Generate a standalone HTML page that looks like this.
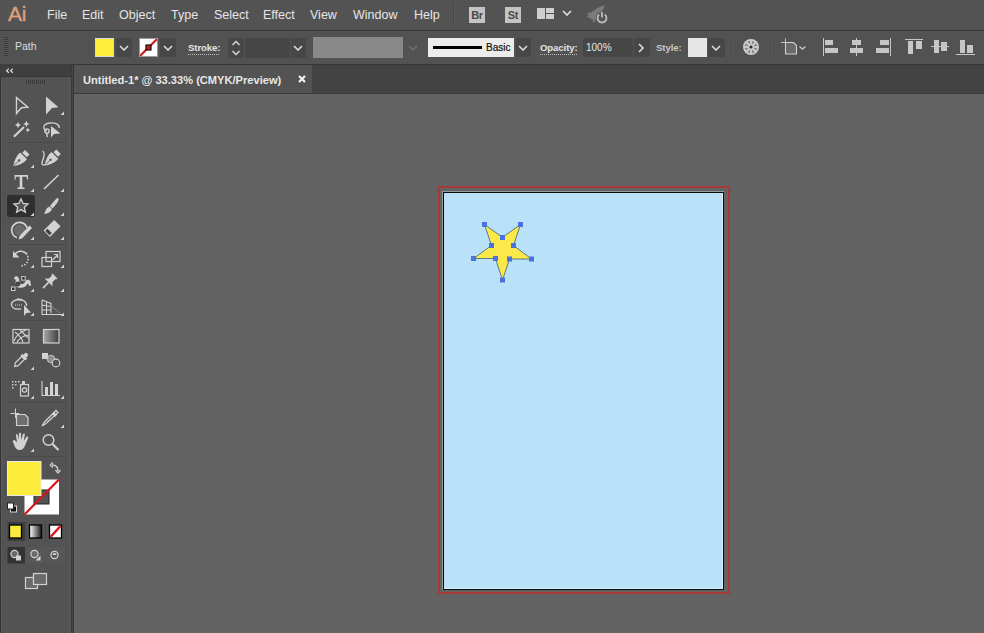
<!DOCTYPE html>
<html><head><meta charset="utf-8">
<style>
*{margin:0;padding:0;box-sizing:border-box}
html,body{width:984px;height:633px;overflow:hidden;background:#636363;font-family:"Liberation Sans",sans-serif}
.a{position:absolute}
#menubar{left:0;top:0;width:984px;height:31px;background:#535353}
#menubar .m{position:absolute;top:8px;font-size:12.5px;color:#e6e6e6;white-space:nowrap}
#mline{left:0;top:30px;width:984px;height:1px;background:#383838}
#ctrl{left:0;top:31px;width:984px;height:33px;background:#525252}
#cline{left:0;top:64px;width:984px;height:1px;background:#363636}
#tabbar{left:72px;top:65px;width:912px;height:28px;background:#434343}
#tab{left:74px;top:65px;width:238px;height:28px;background:#535353}
#tline{left:72px;top:93px;width:912px;height:1px;background:#3a3a3a}
#tools{left:0;top:65px;width:71px;height:568px;background:#535353}
#thead{left:0;top:64px;width:71px;height:13px;background:#3f3f3f}
#tsep{left:71px;top:65px;width:3px;height:568px;background:linear-gradient(90deg,#3b3b3b 0 1px,#464646 1px 2px,#363636 2px 3px)}
.lbl{font-size:10px;color:#e0e0e0;white-space:nowrap}
.dd{background:#474747;border-radius:2px}
</style></head><body>
<div class="a" id="menubar">
  <div class="a" style="left:8px;top:2px;font-size:21px;color:#dea07a;-webkit-text-stroke:0.4px #dea07a;letter-spacing:-0.3px">Ai</div>
  <span class="m" style="left:47px">File</span>
  <span class="m" style="left:82px">Edit</span>
  <span class="m" style="left:119px">Object</span>
  <span class="m" style="left:171px">Type</span>
  <span class="m" style="left:214px">Select</span>
  <span class="m" style="left:263px">Effect</span>
  <span class="m" style="left:310px">View</span>
  <span class="m" style="left:353px">Window</span>
  <span class="m" style="left:414px">Help</span>
</div>
<div class="a" id="mline"></div>

<!-- menubar icons -->
<div class="a" style="left:453px;top:4px;width:1px;height:22px;background:#474747"></div>
<div class="a" style="left:454px;top:4px;width:1px;height:22px;background:#5c5c5c"></div>
<div class="a" style="left:469px;top:7px;width:16px;height:16px;background:#c4c4c4;color:#4a4a4a;font-size:11px;font-weight:bold;line-height:16px;text-align:center;letter-spacing:-0.3px">Br</div>
<div class="a" style="left:505px;top:7px;width:16px;height:16px;background:#c4c4c4;color:#4a4a4a;font-size:11px;font-weight:bold;line-height:16px;text-align:center;letter-spacing:-0.3px">St</div>
<div class="a" style="left:537px;top:8px;width:8px;height:11px;background:#cfcfcf"></div>
<div class="a" style="left:546px;top:8px;width:8px;height:5px;background:#cfcfcf"></div>
<div class="a" style="left:546px;top:14px;width:8px;height:5px;background:#cfcfcf"></div>
<svg class="a" style="left:562px;top:10px" width="10" height="6" viewBox="0 0 10 6"><path d="M1 1 L5 5 L9 1" fill="none" stroke="#e0e0e0" stroke-width="1.6"/></svg>
<svg class="a" style="left:584px;top:3px" width="28" height="22" viewBox="0 0 28 22">
 <path d="M3 14 C7 9 13 4 21 2 C19 8 15 13 10 17 Z" fill="#7a7a7a"/>
 <path d="M2 11 L6 9 L8 12 Z M8 17 L10 20 L12 16 Z" fill="#7a7a7a"/>
 <circle cx="18" cy="15" r="6.2" fill="#535353"/>
 <path d="M15.2 11.5 A4.5 4.5 0 1 0 20.8 11.5" fill="none" stroke="#bdbdbd" stroke-width="1.8"/>
 <path d="M18 9 V14.5" stroke="#bdbdbd" stroke-width="1.8"/>
</svg>

<div class="a" id="ctrl"></div>
<div class="a" id="cline"></div>

<!-- control bar content -->
<div class="a" style="left:4px;top:37px;width:4px;height:20px;background:repeating-linear-gradient(#3c3c3c 0 1px,#555 1px 2px)"></div>
<div class="a lbl" style="left:15px;top:40px;font-size:10.5px;color:#dcdcdc">Path</div>
<div class="a" style="left:95px;top:38px;width:19px;height:19px;background:#fdee3b;border:1px solid #d8d8d8"></div>
<div class="a dd" style="left:116px;top:38px;width:16px;height:19px"></div>
<svg class="a" style="left:119px;top:45px" width="10" height="6" viewBox="0 0 10 6"><path d="M1 1 L5 5 L9 1" fill="none" stroke="#dcdcdc" stroke-width="1.6"/></svg>
<div class="a" style="left:139px;top:38px;width:19px;height:19px;background:#fff;border:1px solid #9a9a9a;overflow:hidden">
 <svg width="19" height="19" style="position:absolute;left:-1px;top:-1px"><line x1="1" y1="18" x2="18" y2="1" stroke="#d01818" stroke-width="2"/><rect x="7" y="7" width="5" height="5" fill="#d01818" stroke="#111" stroke-width="1.2"/></svg>
</div>
<div class="a dd" style="left:160px;top:38px;width:16px;height:19px"></div>
<svg class="a" style="left:163px;top:45px" width="10" height="6" viewBox="0 0 10 6"><path d="M1 1 L5 5 L9 1" fill="none" stroke="#dcdcdc" stroke-width="1.6"/></svg>
<div class="a lbl" style="left:188px;top:42px;font-size:9.6px;font-weight:bold;color:#e4e4e4;letter-spacing:-0.1px">Stroke:</div>
<div class="a" style="left:188px;top:54px;width:32px;height:1px;background:repeating-linear-gradient(90deg,#bdbdbd 0 1px,transparent 1px 2px)"></div>
<div class="a dd" style="left:228px;top:38px;width:16px;height:20px"></div>
<svg class="a" style="left:231px;top:40px" width="10" height="16" viewBox="0 0 10 16"><path d="M1.5 5 L5 1.5 L8.5 5 M1.5 11 L5 14.5 L8.5 11" fill="none" stroke="#dcdcdc" stroke-width="1.4"/></svg>
<div class="a dd" style="left:245px;top:38px;width:45px;height:20px"></div>
<div class="a dd" style="left:291px;top:38px;width:15px;height:20px"></div>
<svg class="a" style="left:293px;top:45px" width="10" height="6" viewBox="0 0 10 6"><path d="M1 1 L5 5 L9 1" fill="none" stroke="#dcdcdc" stroke-width="1.6"/></svg>
<div class="a" style="left:313px;top:37px;width:90px;height:21px;background:#898989"></div>
<svg class="a" style="left:408px;top:45px" width="10" height="6" viewBox="0 0 10 6"><path d="M1 1 L5 5 L9 1" fill="none" stroke="#6e6e6e" stroke-width="1.6"/></svg>
<div class="a" style="left:428px;top:38px;width:86px;height:19px;background:#ececec"></div>
<div class="a" style="left:433px;top:46px;width:49px;height:3px;background:#000"></div>
<div class="a" style="left:486px;top:42px;font-size:10px;color:#111;-webkit-text-stroke:0.2px #111">Basic</div>
<div class="a dd" style="left:516px;top:38px;width:15px;height:19px"></div>
<svg class="a" style="left:518px;top:45px" width="10" height="6" viewBox="0 0 10 6"><path d="M1 1 L5 5 L9 1" fill="none" stroke="#dcdcdc" stroke-width="1.6"/></svg>
<div class="a lbl" style="left:540px;top:42px;font-size:9.6px;font-weight:bold;color:#e4e4e4;letter-spacing:-0.1px">Opacity:</div>
<div class="a" style="left:540px;top:54px;width:37px;height:1px;background:repeating-linear-gradient(90deg,#bdbdbd 0 1px,transparent 1px 2px)"></div>
<div class="a dd" style="left:583px;top:38px;width:50px;height:19px"></div>
<div class="a" style="left:586px;top:42px;font-size:10px;color:#e6e6e6">100%</div>
<div class="a dd" style="left:634px;top:38px;width:16px;height:19px"></div>
<svg class="a" style="left:638px;top:43px" width="6" height="10" viewBox="0 0 6 10"><path d="M1 1 L5 5 L1 9" fill="none" stroke="#dcdcdc" stroke-width="1.6"/></svg>
<div class="a lbl" style="left:656px;top:42px;font-size:9.6px;font-weight:bold;color:#c8c8c8;letter-spacing:-0.1px">Style:</div>
<div class="a" style="left:688px;top:38px;width:19px;height:19px;background:#e6e6e6"></div>
<div class="a dd" style="left:708px;top:38px;width:17px;height:19px"></div>
<svg class="a" style="left:711px;top:45px" width="10" height="6" viewBox="0 0 10 6"><path d="M1 1 L5 5 L9 1" fill="none" stroke="#dcdcdc" stroke-width="1.6"/></svg>
<div class="a" style="left:731px;top:35px;width:1px;height:26px;background:#4a4a4a"></div><div class="a" style="left:732px;top:35px;width:1px;height:26px;background:#585858"></div>
<svg class="a" style="left:742px;top:38px" width="18" height="18" viewBox="0 0 18 18"><circle cx="9" cy="9" r="8" fill="#cdcdcd"/><circle cx="9" cy="9" r="6.3" fill="#8a8a8a"/><g stroke="#d6d6d6" stroke-width="1.6">
<line x1="9" y1="2.5" x2="9" y2="15.5"/><line x1="2.5" y1="9" x2="15.5" y2="9"/><line x1="4.4" y1="4.4" x2="13.6" y2="13.6"/><line x1="13.6" y1="4.4" x2="4.4" y2="13.6"/></g><circle cx="9" cy="9" r="1.6" fill="#2a2a2a"/></svg>
<div class="a" style="left:770px;top:35px;width:1px;height:26px;background:#4a4a4a"></div><div class="a" style="left:771px;top:35px;width:1px;height:26px;background:#585858"></div>
<svg class="a" style="left:780px;top:38px" width="30" height="18" viewBox="0 0 30 18"><path d="M1 4.5 H5.5 M5.5 0.5 V4.5" fill="none" stroke="#c6c6c6" stroke-width="1"/><path d="M5.5 4.5 H13.5 L16.5 7.5 V16 H5.5 Z" fill="#6a6a6a" stroke="#d0d0d0" stroke-width="1.1"/><path d="M19.5 8.5 L22.5 11 L25.5 8.5" fill="none" stroke="#c6c6c6" stroke-width="1.4"/></svg>
<g></g>
<div class="a" style="left:823px;top:38px;width:1px;height:18px;background:#c6c6c6"></div>
<div class="a" style="left:825px;top:40px;width:8px;height:5px;background:#c6c6c6"></div>
<div class="a" style="left:825px;top:48px;width:13px;height:5px;background:#c6c6c6"></div>
<div class="a" style="left:856px;top:38px;width:1px;height:18px;background:#c6c6c6"></div>
<div class="a" style="left:852px;top:40px;width:9px;height:5px;background:#c6c6c6"></div>
<div class="a" style="left:850px;top:48px;width:13px;height:5px;background:#c6c6c6"></div>
<div class="a" style="left:890px;top:38px;width:1px;height:18px;background:#c6c6c6"></div>
<div class="a" style="left:880px;top:40px;width:9px;height:5px;background:#c6c6c6"></div>
<div class="a" style="left:876px;top:48px;width:13px;height:5px;background:#c6c6c6"></div>
<div class="a" style="left:905px;top:39px;width:18px;height:1px;background:#c6c6c6"></div>
<div class="a" style="left:908px;top:41px;width:5px;height:13px;background:#c6c6c6"></div>
<div class="a" style="left:916px;top:41px;width:6px;height:8px;background:#c6c6c6"></div>
<div class="a" style="left:931px;top:46px;width:18px;height:1px;background:#c6c6c6"></div>
<div class="a" style="left:934px;top:40px;width:5px;height:13px;background:#c6c6c6"></div>
<div class="a" style="left:941px;top:42px;width:6px;height:9px;background:#c6c6c6"></div>
<div class="a" style="left:956px;top:54px;width:19px;height:1px;background:#c6c6c6"></div>
<div class="a" style="left:960px;top:40px;width:5px;height:13px;background:#c6c6c6"></div>
<div class="a" style="left:967px;top:45px;width:6px;height:8px;background:#c6c6c6"></div>

<div class="a" id="tabbar"></div>
<div class="a" id="tab"></div>
<div class="a" id="tline"></div>
<div class="a" id="tabtxt" style="left:83px;top:74px;font-size:11.1px;font-weight:bold;color:#e8e8e8;white-space:nowrap">Untitled-1* @ 33.33% (CMYK/Preview)</div>
<svg class="a" style="left:298px;top:75px" width="8" height="8" viewBox="0 0 8 8"><path d="M1 1 L7 7 M7 1 L1 7" stroke="#f4f4f4" stroke-width="2.2"/></svg>

<div class="a" id="tools"></div>
<div class="a" id="thead"></div>
<div class="a" id="tsep"></div>

<!-- toolbar -->
<svg class="a" style="left:0;top:0" width="74" height="633" viewBox="0 0 74 633">
 <rect x="0" y="65" width="1" height="568" fill="#343434"/>
 <rect x="1" y="77" width="1" height="556" fill="#5a5a5a"/>
 <rect x="5" y="77" width="1" height="556" fill="#4f4f4f"/>
 <rect x="6" y="77" width="1" height="556" fill="#585858"/>
 <rect x="66" y="77" width="5" height="556" fill="#555555"/>
 <rect x="66" y="77" width="1" height="556" fill="#4f4f4f"/>
 <rect x="0" y="65" width="71" height="12" fill="#3f3f3f"/>
 <rect x="0" y="76" width="71" height="1" fill="#363636"/>
 <path d="M8.8 68.6 L6.6 70.7 L8.8 72.8 M12.8 68.6 L10.6 70.7 L12.8 72.8" fill="none" stroke="#dcdcdc" stroke-width="1.2"/>
 <g fill="#3a3a3a"><rect x="26" y="80" width="1" height="4"/><rect x="28" y="80" width="1" height="4"/><rect x="30" y="80" width="1" height="4"/><rect x="32" y="80" width="1" height="4"/><rect x="34" y="80" width="1" height="4"/><rect x="36" y="80" width="1" height="4"/><rect x="38" y="80" width="1" height="4"/><rect x="40" y="80" width="1" height="4"/><rect x="42" y="80" width="1" height="4"/><rect x="44" y="80" width="1" height="4"/></g>
 <!-- group separators -->
 <g fill="#4a4a4a"><rect x="7" y="142" width="58" height="1"/><rect x="7" y="244" width="58" height="1"/><rect x="7" y="320" width="58" height="1"/><rect x="7" y="402" width="58" height="1"/><rect x="7" y="456" width="58" height="1"/></g>
 <g fill="#d2d2d2" stroke="none">
 <!-- row1 selection -->
 <path d="M16.5 97.5 L27.8 107.2 L21.3 107.7 L16.5 113.5 Z" fill="none" stroke="#d2d2d2" stroke-width="1.4" stroke-linejoin="miter"/>
 <path d="M46 96.5 L58.5 107.2 L52 108 L46 114.5 Z"/>
 <path d="M64 111.5 L64 115 L60.5 115 Z" fill="#d2d2d2"/>
 <!-- row2 magic wand -->
 <path d="M13.8 136.8 L24 127" stroke="#d2d2d2" stroke-width="2.2"/>
 <path d="M18 121.8 l1 2.2 2.2 1 -2.2 1 -1 2.2 -1 -2.2 -2.2 -1 2.2 -1z M26.3 120.8 l1 2.2 2.2 1 -2.2 1 -1 2.2 -1 -2.2 -2.2 -1 2.2 -1z M27.8 127.6 l0.8 1.6 1.6 0.8 -1.6 0.8 -0.8 1.6 -0.8 -1.6 -1.6 -0.8 1.6 -0.8z"/>
 <!-- lasso -->
 <path d="M47 131 C42 129 43 123.5 50 123 C56 122.5 60 125 59 128" fill="none" stroke="#d2d2d2" stroke-width="1.3"/>
 <circle cx="47" cy="131" r="2.2" fill="none" stroke="#d2d2d2" stroke-width="1.3"/>
 <path d="M46.5 133 L47.5 137" stroke="#d2d2d2" stroke-width="1.3"/>
 <path d="M51 126 L51 137.5 L54 134 L60.5 133.5 Z"/>
 <!-- row3 pen -->
 <g transform="translate(20.2,159.3) rotate(45)"><rect x="-3.2" y="-10" width="6.4" height="4"/><path d="M-4.8 -4.8 H4.8 C5.5 0 3.5 4.5 0 10 C-3.5 4.5 -5.5 0 -4.8 -4.8 Z"/><circle cx="0" cy="1.5" r="1.2" fill="#535353"/><path d="M0 2.5 L0 10" stroke="#535353" stroke-width="0.8"/></g>
 <path d="M34 164.5 L34 168 L30.5 168 Z" fill="#d2d2d2"/>
 <g transform="translate(51.5,158.8) rotate(45)"><rect x="-3.2" y="-10" width="6.4" height="4"/><path d="M-4.8 -4.8 H4.8 C5.5 0 3.5 4.5 0 10 C-3.5 4.5 -5.5 0 -4.8 -4.8 Z"/><circle cx="0" cy="1.5" r="1.2" fill="#535353"/><path d="M0 2.5 L0 10" stroke="#535353" stroke-width="0.8"/></g>
 <path d="M42.5 151 C45 152 44 157 42.5 161 C41 165 43 166 46 164" fill="none" stroke="#d2d2d2" stroke-width="1.3"/>
 <!-- row4 type -->
 <path d="M14.5 175 H28 V179.5 H26.8 V176.8 H22.3 V187.5 H24.5 V189 H17.5 V187.5 H19.7 V176.8 H15.7 V179.5 H14.5 Z"/>
 <path d="M34 188.5 L34 192 L30.5 192 Z" fill="#d2d2d2"/>
 <path d="M44 189 L58.5 175" stroke="#d2d2d2" stroke-width="1.6"/>
 <path d="M64 188.5 L64 192 L60.5 192 Z" fill="#d2d2d2"/>
 <!-- row5 star selected -->
 <rect x="7" y="195" width="28" height="22" rx="2" fill="#2f2f2f"/>
 <path d="M21 199 L23.1 203.5 L28 204 L24.3 207.3 L25.4 212.2 L21 209.6 L16.6 212.2 L17.7 207.3 L14 204 L18.9 203.5 Z" fill="#535353" stroke="#d2d2d2" stroke-width="1.3" stroke-linejoin="miter"/>
 <path d="M34 212.5 L34 216 L30.5 216 Z" fill="#d2d2d2"/>
 <path d="M58 198 C60 199 57 204 52.5 208.5 L50 206 C54 201.5 56.5 197.5 58 198 Z"/>
 <path d="M49.5 206.5 L52 209 C51 212 48 213.5 44 214 C45.5 212 45.5 208 49.5 206.5 Z"/>
 <path d="M64 212.5 L64 216 L60.5 216 Z" fill="#d2d2d2"/>
 <!-- row6 shaper -->
 <circle cx="19.5" cy="230" r="5.6" fill="#6a6a6a"/>
 <path d="M17 237.6 A7.8 7.8 0 1 1 27 228" fill="none" stroke="#d2d2d2" stroke-width="1.7"/>
 <path d="M19.5 236 L29.5 225.5 L32 228 L22 238.5 L18.5 239.5 Z"/>
 <path d="M34 236.5 L34 240 L30.5 240 Z" fill="#d2d2d2"/>
 <g transform="translate(51,229.5) rotate(45)"><path d="M-4.5 -9 H4.5 V6 H-4.5 Z"/><rect x="-3" y="2" width="6" height="3" fill="#404040"/></g>
 <path d="M64 236.5 L64 240 L60.5 240 Z" fill="#d2d2d2"/>
 <!-- row7 rotate -->
 <path d="M14.5 255 A7.3 7.3 0 1 1 14.5 262" fill="none" stroke="#d2d2d2" stroke-width="1.6" stroke-dasharray="15 1.5 1.5 1.5 1.5 1.5 1.5 1.5 1.5 1.5 1.5"/>
 <path d="M13 251 L13 257.5 L19.5 257.5 Z"/>
 <path d="M34 264.5 L34 268 L30.5 268 Z" fill="#d2d2d2"/>
 <rect x="46" y="251.5" width="14" height="10" fill="none" stroke="#d2d2d2" stroke-width="1.2"/>
 <rect x="42" y="257.5" width="9.5" height="9" fill="none" stroke="#d2d2d2" stroke-width="1.2"/>
 <path d="M52.5 260 L57.5 255 M54 254.5 H57.5 V258" fill="none" stroke="#d2d2d2" stroke-width="1.2"/>
 <path d="M64 264.5 L64 268 L60.5 268 Z" fill="#d2d2d2"/>
 <!-- row8 puppet warp -->
 <path d="M14 278.5 C14.5 275.5 18.5 275.5 19 279 L19.5 282.5 C20.5 285 24 284.5 25 282 C26 279 29.5 279 30.5 281.5 L31 286 L28.8 285.5 C28.3 283.5 27.5 283 26.8 284.8 C25.8 287.5 22 288 18 287.5 C15.8 287 15.5 285 15.5 282.5 L15.8 280 C15.5 278.8 14.5 279.5 14 278.5 Z"/>
 <circle cx="17.8" cy="284" r="2" fill="#535353" stroke="#2c2c2c" stroke-width="1"/>
 <rect x="11.5" y="287" width="3.5" height="3.5" fill="#2c2c2c" stroke="#d2d2d2" stroke-width="1"/>
 <rect x="21.7" y="276.6" width="3.5" height="3.5" fill="#2c2c2c" stroke="#d2d2d2" stroke-width="1"/>
 <path d="M34 288.5 L34 292 L30.5 292 Z" fill="#d2d2d2"/>
 <g transform="translate(50,281) rotate(45)"><path d="M-3.5 -7 H3.5 V-5.5 H2.5 V-1 L5.5 2 H-5.5 L-2.5 -1 V-5.5 H-3.5 Z"/><path d="M0 2 V10" stroke="#d2d2d2" stroke-width="1.6"/></g>
 <path d="M64 288.5 L64 292 L60.5 292 Z" fill="#d2d2d2"/>
 <!-- row9 shape builder -->
 <path d="M22 300 C15 299 11 301.5 11.5 305 C12 308.5 16 309.5 21 309" fill="none" stroke="#d2d2d2" stroke-width="1.3"/>
 <path d="M17 299 C23 299 27 302 26.5 306" fill="none" stroke="#d2d2d2" stroke-width="1.3"/>
 <g fill="#d2d2d2"><rect x="15" y="304.5" width="1" height="1"/><rect x="17" y="304.5" width="1" height="1"/><rect x="19" y="304.5" width="1" height="1"/><rect x="21" y="304.5" width="1" height="1"/></g>
 <path d="M24 305 L24 316 L26.5 313 L31 312.5 Z"/>
 <path d="M34 312.5 L34 316 L30.5 316 Z" fill="#d2d2d2"/>
 <path d="M42 300 L42 314.5 L62 314.5 M42 300 L51 303.5 L51 313 M42 305 L51 306.5 M42 310 L51 310 M46.5 301.5 L46.5 314" fill="none" stroke="#d2d2d2" stroke-width="1.1"/>
 <path d="M51 306 L60 313" stroke="#8a8a8a" stroke-width="1"/>
 <path d="M64 312.5 L64 316 L60.5 316 Z" fill="#d2d2d2"/>
 <!-- row10 mesh -->
 <rect x="13" y="329.5" width="16" height="13.5" fill="none" stroke="#d2d2d2" stroke-width="1.2"/>
 <path d="M14 341 C16 336 20 332 26 330 M17 342.5 C19 338 23 336 28.5 335 M15 332 C19 335 22 338 23 342.5 M20 330 C23 333 26 336 28.5 338" fill="none" stroke="#d2d2d2" stroke-width="1.1"/>
 <defs><linearGradient id="g1" x1="0" x2="1"><stop offset="0" stop-color="#a8a8a8"/><stop offset="1" stop-color="#3c3c3c"/></linearGradient>
 <linearGradient id="g2" x1="0" x2="1"><stop offset="0" stop-color="#ffffff"/><stop offset="1" stop-color="#1a1a1a"/></linearGradient></defs>
 <rect x="43.5" y="329.5" width="15.5" height="13.5" fill="url(#g1)" stroke="#d2d2d2" stroke-width="1.2"/>
 <!-- row11 eyedropper -->
 <g transform="translate(21,360) rotate(45)"><rect x="-2" y="-9" width="4" height="4" rx="1.5"/><rect x="-3.5" y="-5.5" width="7" height="2.5"/><path d="M-2 -3 L2 -3 L2 6 L0 9 L-2 6 Z" fill="none" stroke="#d2d2d2" stroke-width="1.2"/></g>
 <path d="M34 366.5 L34 370 L30.5 370 Z" fill="#d2d2d2"/>
 <rect x="42" y="353" width="6" height="6"/>
 <circle cx="51" cy="359" r="3.8" fill="#8e8e8e" stroke="#d2d2d2" stroke-width="0.8"/>
 <circle cx="56" cy="363" r="3.8" fill="#535353" stroke="#d2d2d2" stroke-width="1.2"/>
 <!-- row12 symbol sprayer -->
 <g><rect x="12" y="381" width="1.5" height="1.5"/><rect x="15" y="381" width="1.5" height="1.5"/><rect x="18" y="381" width="1.5" height="1.5"/><rect x="12" y="384" width="1.5" height="1.5"/><rect x="15" y="384" width="1.5" height="1.5"/><rect x="12" y="387" width="1.5" height="1.5"/></g>
 <rect x="22" y="381" width="3" height="3"/>
 <rect x="20.5" y="384.5" width="8" height="11.5" fill="none" stroke="#d2d2d2" stroke-width="1.2"/>
 <circle cx="24.5" cy="390" r="2.2" fill="none" stroke="#d2d2d2" stroke-width="1.2"/>
 <path d="M34 395.5 L34 399 L30.5 399 Z" fill="#d2d2d2"/>
 <path d="M42 381 V395.5 H60" fill="none" stroke="#d2d2d2" stroke-width="1.1"/>
 <rect x="45" y="387" width="3" height="8"/><rect x="50" y="382" width="3" height="13"/><rect x="55" y="384" width="3" height="11"/>
 <path d="M64 395.5 L64 399 L60.5 399 Z" fill="#d2d2d2"/>
 <!-- row13 artboard -->
 <path d="M15.5 408.5 V418 M10.5 413.5 H19.5" fill="none" stroke="#d2d2d2" stroke-width="1"/>
 <path d="M16.5 414.5 H25 L28 417.5 V425.5 H16.5 Z" fill="#6e6e6e" stroke="#d2d2d2" stroke-width="1.2"/>
 <path d="M56 410.5 L58 412.5 L46 423.5 L42 426 L44.5 422 Z" fill="none" stroke="#d2d2d2" stroke-width="1.3"/>
 <path d="M53 413 L56 416" stroke="#d2d2d2" stroke-width="3"/>
 <path d="M64 424.5 L64 428 L60.5 428 Z" fill="#d2d2d2"/>
 <!-- row14 hand -->
 <path d="M13 442 C12.5 440.5 14 439.5 15 440.5 L17 442.5 L16 435.5 C15.8 434 17.8 433.8 18 435.3 L19 440 L19 433.8 C19 432.3 21 432.3 21 433.8 L21.2 440 L22.8 434.5 C23.2 433 25 433.5 24.8 435 L23.8 440.8 L26.5 437 C27.3 436 28.8 436.8 28.2 438 L25 445.5 C24 448.5 22 450 19.5 450 C17.5 450 16 449 15 447 Z"/>
 <path d="M34 448.5 L34 452 L30.5 452 Z" fill="#d2d2d2"/>
 <circle cx="48.5" cy="440" r="5.3" fill="none" stroke="#d2d2d2" stroke-width="1.5"/>
 <path d="M52.5 444 L58.5 450" stroke="#d2d2d2" stroke-width="2.2"/>
 </g>
 <!-- fill / stroke -->
 <rect x="24.5" y="479.5" width="34.5" height="35" fill="#ffffff"/>
 <rect x="34" y="490" width="15" height="14" fill="#535353"/>
 <rect x="34" y="490" width="15" height="14" fill="none" stroke="#222" stroke-width="1"/>
 <path d="M24.5 514.5 L59 479.5" stroke="#d4161c" stroke-width="2.2"/>
 <rect x="7.5" y="461.5" width="33.5" height="34" fill="#fdec3c" stroke="#e8e8e8" stroke-width="1"/>
 <path d="M52 465 C56 465 58 467 58 471 M50 465 L53 462.5 M50 465 L53 467.5 M58 473 L55.5 470 M58 473 L60.5 470" fill="none" stroke="#d2d2d2" stroke-width="1.3"/>
 <rect x="10.5" y="506" width="6" height="6" fill="#111" stroke="#d8d8d8" stroke-width="1"/>
 <rect x="7.5" y="503" width="6" height="6" fill="#fff" stroke="#222" stroke-width="1"/>
 <!-- color mode buttons -->
 <rect x="7.5" y="522" width="17.5" height="19" fill="#3c3c3c"/>
 <rect x="9.5" y="525" width="12" height="13" fill="#fdec3c" stroke="#000" stroke-width="1.3"/>
 <rect x="29.5" y="525" width="12" height="13" fill="url(#g2)" stroke="#000" stroke-width="1.3"/>
 <rect x="49.5" y="525" width="12" height="13" fill="#fff" stroke="#000" stroke-width="1.3"/>
 <path d="M50.5 537 L60.5 526" stroke="#e0141a" stroke-width="2.4"/>
 <rect x="25.5" y="521" width="1" height="21" fill="#4a4a4a"/>
 <rect x="45" y="521" width="1" height="21" fill="#4a4a4a"/>
 <!-- draw modes -->
 <rect x="7.5" y="547" width="17.5" height="16.5" fill="#333"/>
 <rect x="25.5" y="547" width="40" height="16.5" fill="#575757"/>
 <circle cx="14.5" cy="554" r="3.6" fill="#6a6a6a" stroke="#d2d2d2" stroke-width="1.2"/>
 <rect x="16" y="555.5" width="5" height="5" fill="#d2d2d2"/>
 <circle cx="34.5" cy="554" r="3.6" fill="#6a6a6a" stroke="#d2d2d2" stroke-width="1.2"/>
 <path d="M35.5 560.5 L40.5 555.5 L40.5 560.5 Z" fill="#d2d2d2"/>
 <circle cx="54.5" cy="555" r="3.6" fill="none" stroke="#d2d2d2" stroke-width="1.2"/>
 <path d="M52.5 555 A2 2 0 0 1 56.5 555" fill="#d2d2d2"/>
 <!-- screen mode -->
 <rect x="25.5" y="577.5" width="12" height="11" fill="#6a6a6a" stroke="#d2d2d2" stroke-width="1.2"/>
 <rect x="33.5" y="573.5" width="13" height="11" fill="#6a6a6a" stroke="#d2d2d2" stroke-width="1.2"/>
</svg>


<!-- artboard -->
<div class="a" style="left:438px;top:186px;width:292px;height:408px;border:2px solid #a63a3b"></div>
<div class="a" style="left:442px;top:191px;width:282px;height:1px;background:#9a9a9a"></div>
<div class="a" style="left:442px;top:191px;width:1px;height:399px;background:#9a9a9a"></div>
<div class="a" style="left:443px;top:192px;width:281px;height:398px;border:1px solid #0a0a0a;background:#b9e2f8"></div>
<div class="a" style="left:722px;top:193px;width:1px;height:396px;background:#d6effb"></div>
<div class="a" style="left:444px;top:588px;width:279px;height:1px;background:#d6effb"></div>

<!-- star -->
<svg class="a" style="left:440px;top:190px" width="120" height="110" viewBox="440 190 120 110">
 <path d="M484.5 224.5 L502.5 237.3 L520.5 224.5 L513.5 245.5 L531.5 259 L509.5 259 L502.5 280 L495.5 258.5 L473.5 258.5 L491.5 245.5 Z" fill="#fbe94a" stroke="#3a5478" stroke-width="0.9" stroke-linejoin="miter" stroke-opacity="0.85"/>
 <g fill="#4a72e0">
  <rect x="482" y="222" width="5" height="5"/><rect x="518" y="222" width="5" height="5"/>
  <rect x="500" y="235" width="5" height="5"/>
  <rect x="489" y="243" width="5" height="5"/><rect x="511" y="243" width="5" height="5"/>
  <rect x="471" y="256" width="5" height="5"/><rect x="529" y="256.5" width="5" height="5"/>
  <rect x="493" y="256" width="5" height="5"/><rect x="507" y="256.5" width="5" height="5"/>
  <rect x="500" y="277.5" width="5" height="5"/>
 </g>
</svg>
</body></html>
